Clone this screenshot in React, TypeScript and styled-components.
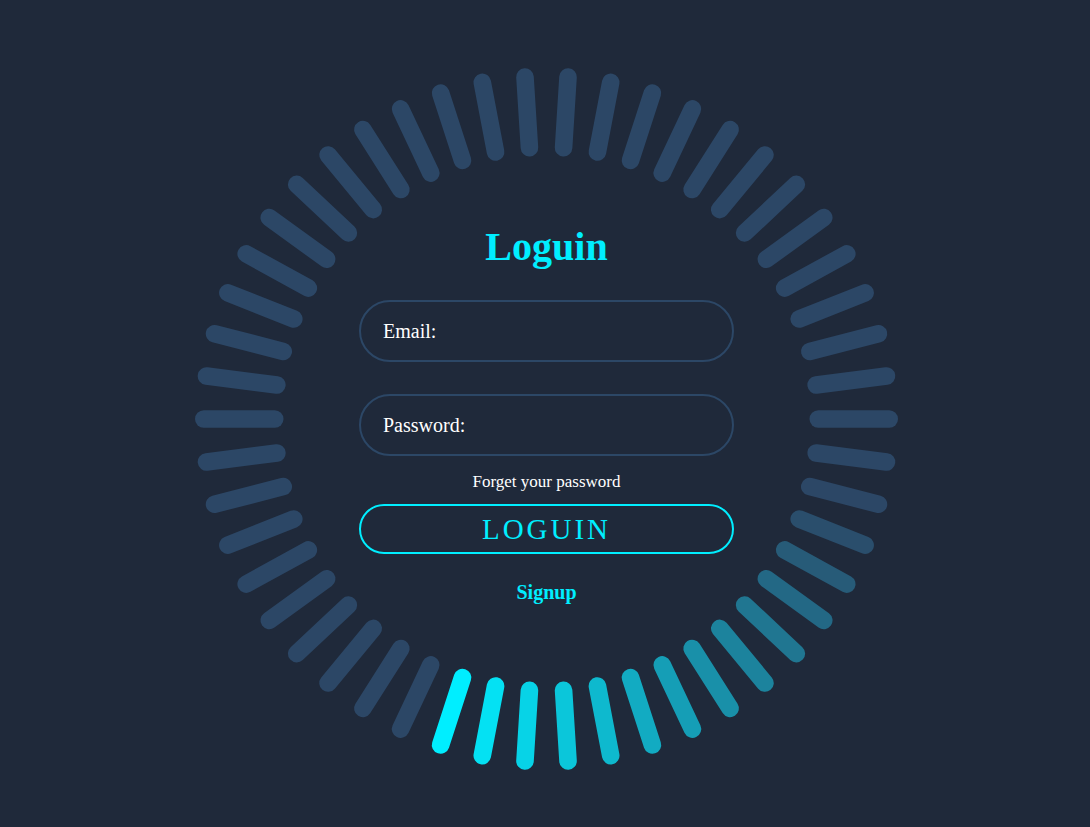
import React from "react";
import styled, { createGlobalStyle } from "styled-components";

const GlobalStyle = createGlobalStyle`
  html, body {
    margin: 0;
    padding: 0;
    background: #1f293a;
    font-family: "Liberation Serif", "Times New Roman", serif;
    overflow: hidden;
  }
`;

const Page = styled.main`
  width: 1090px;
  height: 827px;
  box-sizing: border-box;
  padding: 67px 0 0 195px;
  background: #1f293a;
`;

const Stage = styled.div`
  position: relative;
  width: 703px;
  height: 704px;
  display: flex;
  justify-content: center;
  align-items: flex-start;
`;

const Ring = styled.svg`
  position: absolute;
  left: 0;
  top: 0;
  width: 704px;
  height: 704px;
  pointer-events: none;
`;

const Form = styled.form`
  position: relative;
  width: 375px;
  margin-top: 157px;
  display: flex;
  flex-direction: column;
  align-items: stretch;
`;

const Title = styled.h2`
  margin: 0 0 30px;
  font-size: 40px;
  line-height: 46px;
  font-weight: bold;
  text-align: center;
  color: #00eeff;
`;

const Field = styled.label<{ $gap?: number }>`
  box-sizing: border-box;
  height: 62px;
  border: 2px solid #2c4766;
  border-radius: 40px;
  padding: 0 22px;
  display: flex;
  align-items: center;
  gap: 6px;
  margin-bottom: ${(p) => p.$gap ?? 0}px;
`;

const FieldLabel = styled.span`
  color: #ffffff;
  font-size: 20px;
  white-space: nowrap;
`;

const FieldInput = styled.input`
  flex: 1;
  min-width: 0;
  border: none;
  outline: none;
  background: transparent;
  color: #fff;
  font-family: inherit;
  font-size: 20px;
`;

const Forget = styled.a`
  margin: 16px 0 13px;
  color: #ffffff;
  font-size: 17px;
  line-height: 19px;
  text-align: center;
  text-decoration: none;
`;

const Button = styled.button`
  box-sizing: border-box;
  height: 50px;
  border: 2px solid #00eeff;
  border-radius: 40px;
  background: transparent;
  color: #00eeff;
  font-family: "Liberation Serif", "Times New Roman", serif;
  font-size: 29px;
  letter-spacing: 3px;
  padding: 0;
  cursor: pointer;
`;

const Signup = styled.a`
  margin-top: 27px;
  color: #00eeff;
  font-size: 20px;
  line-height: 23px;
  font-weight: bold;
  text-align: center;
  text-decoration: none;
`;

const COUNT = 50;
const CX = 351.5;
const CY = 352;
const R_IN = 263 + 8.8;
const R_OUT = 351.5 - 8.8;
const BRIGHT = 40;

const mix = (t: number) => {
  const a = [0, 238, 255];
  const b = [44, 71, 102];
  const c = a.map((v, i) => Math.round(v + (b[i] - v) * t));
  return `rgb(${c[0]},${c[1]},${c[2]})`;
};

const bars = Array.from({ length: COUNT }, (_, i) => {
  const th = ((i * 360) / COUNT) * (Math.PI / 180);
  const dx = -Math.cos(th);
  const dy = -Math.sin(th);
  const k = BRIGHT - i;
  const t = k >= 0 && k < 12.5 ? k / 12.5 : 1;
  return {
    x1: CX + dx * R_IN,
    y1: CY + dy * R_IN,
    x2: CX + dx * R_OUT,
    y2: CY + dy * R_OUT,
    color: mix(t),
  };
});

export default function App() {
  return (
    <>
      <GlobalStyle />
      <Page>
        <Stage>
          <Ring viewBox="0 0 704 704">
            {bars.map((b, i) => (
              <line
                key={i}
                x1={b.x1}
                y1={b.y1}
                x2={b.x2}
                y2={b.y2}
                stroke={b.color}
                strokeWidth={17.6}
                strokeLinecap="round"
              />
            ))}
          </Ring>
          <Form onSubmit={(e) => e.preventDefault()}>
            <Title>Loguin</Title>
            <Field $gap={32}>
              <FieldLabel>Email:</FieldLabel>
              <FieldInput type="email" />
            </Field>
            <Field>
              <FieldLabel>Password:</FieldLabel>
              <FieldInput type="password" />
            </Field>
            <Forget href="#">Forget your password</Forget>
            <Button type="submit">LOGUIN</Button>
            <Signup href="#">Signup</Signup>
          </Form>
        </Stage>
      </Page>
    </>
  );
}
